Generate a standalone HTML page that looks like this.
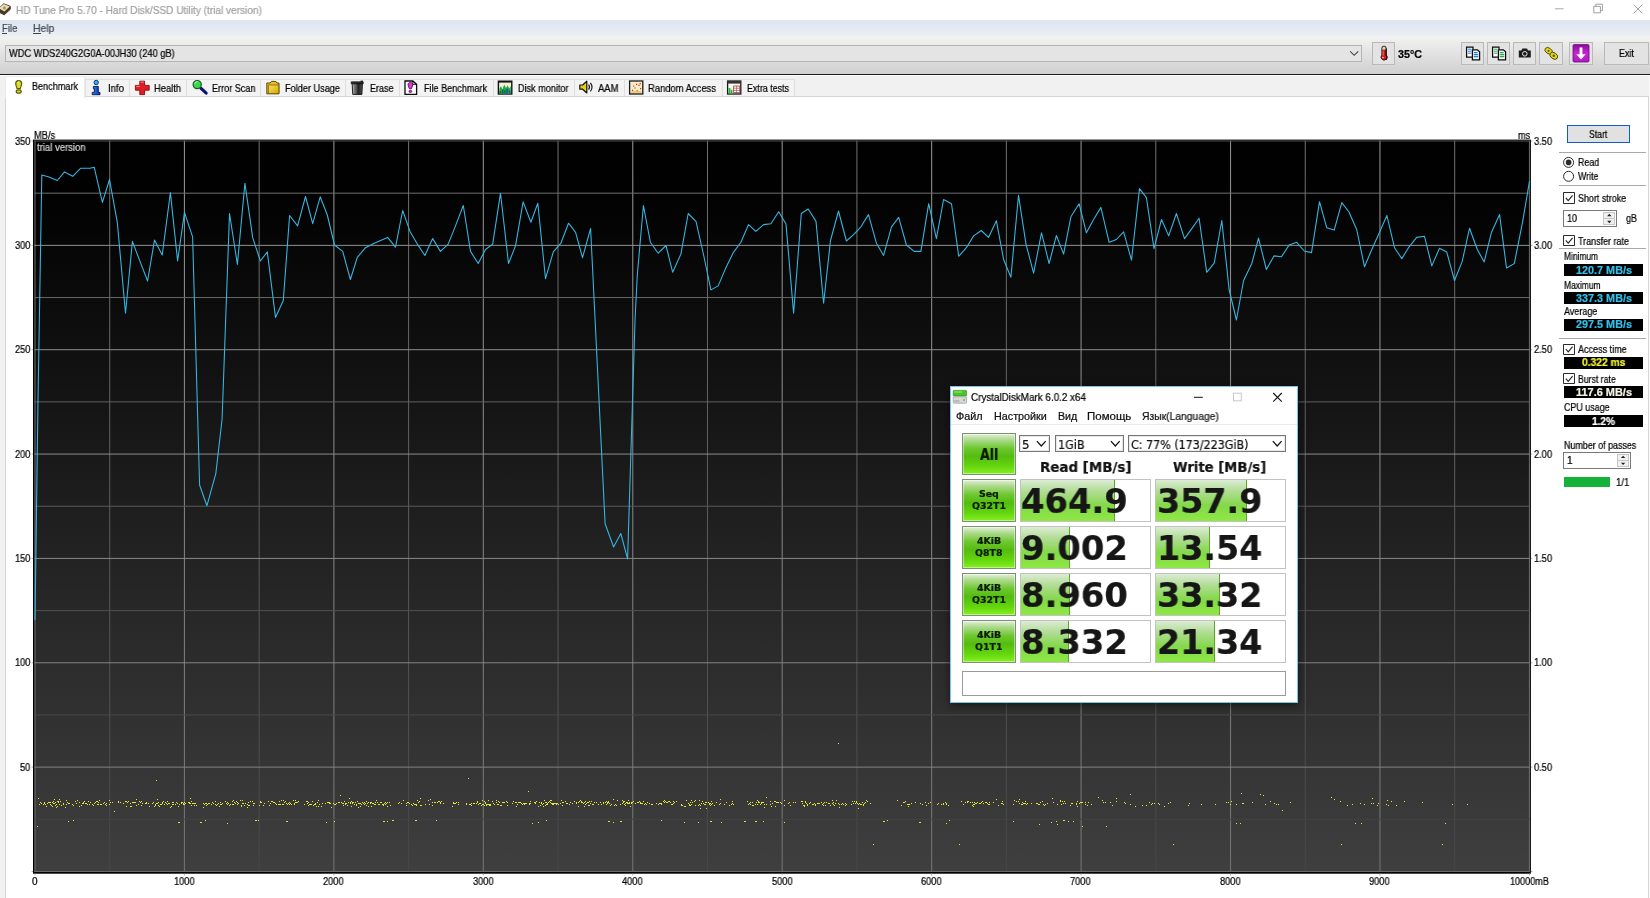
<!DOCTYPE html>
<html lang="en"><head><meta charset="utf-8"><title>HD Tune Pro 5.70 - Hard Disk/SSD Utility (trial version)</title>
<style>
html,body{margin:0;padding:0}
body{width:1650px;height:898px;overflow:hidden;background:#fff;position:relative;font-family:"Liberation Sans",sans-serif}
.t{position:absolute;white-space:nowrap;margin:0;padding:0;will-change:transform;-webkit-text-stroke:0.22px currentColor}
.b{position:absolute;box-sizing:border-box}
svg{position:absolute;left:0;top:0;overflow:visible}
u{text-decoration:underline;text-underline-offset:1px}
</style></head><body>
<div class="b" style="left:0.00px;top:0.00px;width:1650.00px;height:20.00px;background:#fff"></div>
<div class="t" style="left:16.20px;top:3.30px;font-size:10.6px;line-height:14px;color:#a0a0a0;font-family:'Liberation Sans',sans-serif;transform:scaleX(0.9513);transform-origin:0 50%;">HD Tune Pro 5.70 - Hard Disk/SSD Utility (trial version)</div>
<div class="b" style="left:0.00px;top:20.00px;width:1650.00px;height:16.50px;background:linear-gradient(#dde5f0 0%,#e6ebf3 60%,#eef0f4 100%)"></div>
<div class="t" style="left:2.00px;top:20.90px;font-size:10.9px;line-height:14px;color:#414a54;font-family:'Liberation Sans',sans-serif;transform:scaleX(0.8768);transform-origin:0 50%;">File</div>
<div class="t" style="left:33.20px;top:20.90px;font-size:10.9px;line-height:14px;color:#414a54;font-family:'Liberation Sans',sans-serif;transform:scaleX(0.9590);transform-origin:0 50%;">Help</div>
<div class="b" style="left:2.00px;top:33.20px;width:5.10px;height:0.80px;background:#444"></div>
<div class="b" style="left:33.00px;top:33.20px;width:7.50px;height:0.80px;background:#444"></div>
<div class="b" style="left:0.00px;top:36.50px;width:1650.00px;height:37.70px;background:linear-gradient(#f2f2f2 0%,#e2e2e2 45%,#d0d0d0 100%)"></div>
<div class="b" style="left:0.00px;top:74.20px;width:1650.00px;height:1.30px;background:#1c1c1c"></div>
<div class="b" style="left:5.00px;top:44.50px;width:1357.30px;height:17.30px;background:#e4e4e4;border:1px solid #b4b4b4"></div>
<div class="t" style="left:8.60px;top:46.90px;font-size:10.3px;line-height:13px;color:#000;font-family:'Liberation Sans',sans-serif;transform:scaleX(0.8989);transform-origin:0 50%;">WDC WDS240G2G0A-00JH30 (240 gB)</div>
<svg width="1650" height="898"><path d="M1350.2 51.3 L1354.2 55.3 L1358.2 51.3" fill="none" stroke="#444" stroke-width="1.1"/></svg>
<div class="b" style="left:1372.30px;top:42.30px;width:22.60px;height:22.50px;background:#e3e3e3;border:1px solid #b9b9b9"></div>
<div class="t" style="left:1398.00px;top:47.40px;font-size:10.8px;line-height:14px;color:#000;font-family:'Liberation Sans',sans-serif;transform:scaleX(0.9945);transform-origin:0 50%;font-weight:bold;">35°C</div>
<div class="b" style="left:1461.20px;top:42.30px;width:23.10px;height:22.50px;background:#e3e3e3;border:1px solid #b9b9b9"></div>
<div class="b" style="left:1487.10px;top:42.30px;width:23.30px;height:22.50px;background:#e3e3e3;border:1px solid #b9b9b9"></div>
<div class="b" style="left:1513.00px;top:42.30px;width:23.30px;height:22.50px;background:#e3e3e3;border:1px solid #b9b9b9"></div>
<div class="b" style="left:1539.10px;top:42.30px;width:23.50px;height:22.50px;background:#e3e3e3;border:1px solid #b9b9b9"></div>
<div class="b" style="left:1569.20px;top:42.30px;width:23.50px;height:22.50px;background:#e3e3e3;border:1px solid #b9b9b9"></div>
<div class="b" style="left:1604.00px;top:42.30px;width:44.50px;height:22.50px;background:#e3e3e3;border:1px solid #b9b9b9"></div>
<div class="t" style="left:1618.50px;top:47.10px;font-size:10.3px;line-height:13px;color:#000;font-family:'Liberation Sans',sans-serif;transform:scaleX(0.8736);transform-origin:0 50%;">Exit</div>
<div class="b" style="left:0.00px;top:75.50px;width:1650.00px;height:822.50px;background:#f1f1f1"></div>
<div class="b" style="left:5.20px;top:95.60px;width:1643.80px;height:809.40px;background:#fff;border:1px solid #d6d6d6"></div>
<div class="b" style="left:85.00px;top:79.00px;width:45.00px;height:17.20px;background:#f3f3f3;border:1px solid #dedede;border-bottom:none"></div>
<div class="t" style="left:108.40px;top:81.80px;font-size:10.3px;line-height:13px;color:#000;font-family:'Liberation Sans',sans-serif;transform:scaleX(0.9313);transform-origin:0 50%;">Info</div>
<div class="b" style="left:129.00px;top:79.00px;width:58.00px;height:17.20px;background:#f3f3f3;border:1px solid #dedede;border-bottom:none"></div>
<div class="t" style="left:154.40px;top:81.80px;font-size:10.3px;line-height:13px;color:#000;font-family:'Liberation Sans',sans-serif;transform:scaleX(0.9068);transform-origin:0 50%;">Health</div>
<div class="b" style="left:186.00px;top:79.00px;width:75.00px;height:17.20px;background:#f3f3f3;border:1px solid #dedede;border-bottom:none"></div>
<div class="t" style="left:211.90px;top:81.80px;font-size:10.3px;line-height:13px;color:#000;font-family:'Liberation Sans',sans-serif;transform:scaleX(0.8836);transform-origin:0 50%;">Error Scan</div>
<div class="b" style="left:260.00px;top:79.00px;width:86.00px;height:17.20px;background:#f3f3f3;border:1px solid #dedede;border-bottom:none"></div>
<div class="t" style="left:285.40px;top:81.80px;font-size:10.3px;line-height:13px;color:#000;font-family:'Liberation Sans',sans-serif;transform:scaleX(0.8895);transform-origin:0 50%;">Folder Usage</div>
<div class="b" style="left:345.00px;top:79.00px;width:54.50px;height:17.20px;background:#f3f3f3;border:1px solid #dedede;border-bottom:none"></div>
<div class="t" style="left:370.40px;top:81.80px;font-size:10.3px;line-height:13px;color:#000;font-family:'Liberation Sans',sans-serif;transform:scaleX(0.8733);transform-origin:0 50%;">Erase</div>
<div class="b" style="left:398.50px;top:79.00px;width:95.00px;height:17.20px;background:#f3f3f3;border:1px solid #dedede;border-bottom:none"></div>
<div class="t" style="left:423.90px;top:81.80px;font-size:10.3px;line-height:13px;color:#000;font-family:'Liberation Sans',sans-serif;transform:scaleX(0.8804);transform-origin:0 50%;">File Benchmark</div>
<div class="b" style="left:492.50px;top:79.00px;width:82.00px;height:17.20px;background:#f3f3f3;border:1px solid #dedede;border-bottom:none"></div>
<div class="t" style="left:517.90px;top:81.80px;font-size:10.3px;line-height:13px;color:#000;font-family:'Liberation Sans',sans-serif;transform:scaleX(0.8823);transform-origin:0 50%;">Disk monitor</div>
<div class="b" style="left:573.50px;top:79.00px;width:51.00px;height:17.20px;background:#f3f3f3;border:1px solid #dedede;border-bottom:none"></div>
<div class="t" style="left:598.40px;top:81.80px;font-size:10.3px;line-height:13px;color:#000;font-family:'Liberation Sans',sans-serif;transform:scaleX(0.9184);transform-origin:0 50%;">AAM</div>
<div class="b" style="left:623.50px;top:79.00px;width:99.00px;height:17.20px;background:#f3f3f3;border:1px solid #dedede;border-bottom:none"></div>
<div class="t" style="left:648.40px;top:81.80px;font-size:10.3px;line-height:13px;color:#000;font-family:'Liberation Sans',sans-serif;transform:scaleX(0.9137);transform-origin:0 50%;">Random Access</div>
<div class="b" style="left:721.50px;top:79.00px;width:73.00px;height:17.20px;background:#f3f3f3;border:1px solid #dedede;border-bottom:none"></div>
<div class="t" style="left:746.90px;top:81.80px;font-size:10.3px;line-height:13px;color:#000;font-family:'Liberation Sans',sans-serif;transform:scaleX(0.8632);transform-origin:0 50%;">Extra tests</div>
<div class="b" style="left:5.20px;top:75.60px;width:80.30px;height:22.40px;background:#fff;border:1px solid #ebebeb;border-bottom:none"></div>
<div class="t" style="left:32.30px;top:80.10px;font-size:10.3px;line-height:13px;color:#000;font-family:'Liberation Sans',sans-serif;transform:scaleX(0.8830);transform-origin:0 50%;">Benchmark</div>
<svg width="1650" height="898" viewBox="0 0 1650 898">
<defs><linearGradient id="cg" x1="0" y1="0" x2="0" y2="1"><stop offset="0" stop-color="#000"/><stop offset="0.08" stop-color="#020202"/><stop offset="1" stop-color="#3f3f3f"/></linearGradient></defs>
<rect x="33" y="139.6" width="1497.9" height="734.1" fill="#000"/>
<rect x="34.5" y="140.5" width="1495.4" height="731.5" fill="url(#cg)"/>
<defs><linearGradient id="gmin" gradientUnits="userSpaceOnUse" x1="0" y1="141.0" x2="0" y2="871.5"><stop offset="0" stop-color="#727272"/><stop offset="1" stop-color="#464646"/></linearGradient><linearGradient id="gmaj" gradientUnits="userSpaceOnUse" x1="0" y1="141.0" x2="0" y2="871.5"><stop offset="0" stop-color="#8e8e8e"/><stop offset="1" stop-color="#707070"/></linearGradient></defs>
<line x1="35.00" y1="140.5" x2="35.00" y2="872.0" stroke="#6e6e6e" stroke-width="1"/>
<line x1="109.72" y1="140.5" x2="109.72" y2="872.0" stroke="url(#gmin)" stroke-width="1"/>
<line x1="184.44" y1="140.5" x2="184.44" y2="872.0" stroke="url(#gmaj)" stroke-width="1.1"/>
<line x1="259.16" y1="140.5" x2="259.16" y2="872.0" stroke="url(#gmin)" stroke-width="1"/>
<line x1="333.88" y1="140.5" x2="333.88" y2="872.0" stroke="url(#gmaj)" stroke-width="1.1"/>
<line x1="408.60" y1="140.5" x2="408.60" y2="872.0" stroke="url(#gmin)" stroke-width="1"/>
<line x1="483.32" y1="140.5" x2="483.32" y2="872.0" stroke="url(#gmaj)" stroke-width="1.1"/>
<line x1="558.04" y1="140.5" x2="558.04" y2="872.0" stroke="url(#gmin)" stroke-width="1"/>
<line x1="632.76" y1="140.5" x2="632.76" y2="872.0" stroke="url(#gmaj)" stroke-width="1.1"/>
<line x1="707.48" y1="140.5" x2="707.48" y2="872.0" stroke="url(#gmin)" stroke-width="1"/>
<line x1="782.20" y1="140.5" x2="782.20" y2="872.0" stroke="url(#gmaj)" stroke-width="1.1"/>
<line x1="856.92" y1="140.5" x2="856.92" y2="872.0" stroke="url(#gmin)" stroke-width="1"/>
<line x1="931.64" y1="140.5" x2="931.64" y2="872.0" stroke="url(#gmaj)" stroke-width="1.1"/>
<line x1="1006.36" y1="140.5" x2="1006.36" y2="872.0" stroke="url(#gmin)" stroke-width="1"/>
<line x1="1081.08" y1="140.5" x2="1081.08" y2="872.0" stroke="url(#gmaj)" stroke-width="1.1"/>
<line x1="1155.80" y1="140.5" x2="1155.80" y2="872.0" stroke="url(#gmin)" stroke-width="1"/>
<line x1="1230.52" y1="140.5" x2="1230.52" y2="872.0" stroke="url(#gmaj)" stroke-width="1.1"/>
<line x1="1305.24" y1="140.5" x2="1305.24" y2="872.0" stroke="url(#gmin)" stroke-width="1"/>
<line x1="1379.96" y1="140.5" x2="1379.96" y2="872.0" stroke="url(#gmaj)" stroke-width="1.1"/>
<line x1="1454.68" y1="140.5" x2="1454.68" y2="872.0" stroke="url(#gmin)" stroke-width="1"/>
<line x1="1529.40" y1="140.5" x2="1529.40" y2="872.0" stroke="#6e6e6e" stroke-width="1"/>
<line x1="34.5" y1="871.50" x2="1529.9" y2="871.50" stroke="#686868" stroke-width="1"/>
<line x1="34.5" y1="819.32" x2="1529.9" y2="819.32" stroke="#434343" stroke-width="1"/>
<line x1="34.5" y1="767.14" x2="1529.9" y2="767.14" stroke="#818181" stroke-width="1"/>
<line x1="34.5" y1="714.96" x2="1529.9" y2="714.96" stroke="#4a4a4a" stroke-width="1"/>
<line x1="34.5" y1="662.79" x2="1529.9" y2="662.79" stroke="#858585" stroke-width="1"/>
<line x1="34.5" y1="610.61" x2="1529.9" y2="610.61" stroke="#515151" stroke-width="1"/>
<line x1="34.5" y1="558.43" x2="1529.9" y2="558.43" stroke="#888888" stroke-width="1"/>
<line x1="34.5" y1="506.25" x2="1529.9" y2="506.25" stroke="#585858" stroke-width="1"/>
<line x1="34.5" y1="454.07" x2="1529.9" y2="454.07" stroke="#8c8c8c" stroke-width="1"/>
<line x1="34.5" y1="401.89" x2="1529.9" y2="401.89" stroke="#606060" stroke-width="1"/>
<line x1="34.5" y1="349.71" x2="1529.9" y2="349.71" stroke="#8f8f8f" stroke-width="1"/>
<line x1="34.5" y1="297.54" x2="1529.9" y2="297.54" stroke="#676767" stroke-width="1"/>
<line x1="34.5" y1="245.36" x2="1529.9" y2="245.36" stroke="#939393" stroke-width="1"/>
<line x1="34.5" y1="193.18" x2="1529.9" y2="193.18" stroke="#6e6e6e" stroke-width="1"/>
<line x1="34.5" y1="141.00" x2="1529.9" y2="141.00" stroke="#525252" stroke-width="1"/>
<line x1="35.00" y1="873.7" x2="35.00" y2="875.4" stroke="#aaa" stroke-width="1"/>
<line x1="184.44" y1="873.7" x2="184.44" y2="875.4" stroke="#aaa" stroke-width="1"/>
<line x1="333.88" y1="873.7" x2="333.88" y2="875.4" stroke="#aaa" stroke-width="1"/>
<line x1="483.32" y1="873.7" x2="483.32" y2="875.4" stroke="#aaa" stroke-width="1"/>
<line x1="632.76" y1="873.7" x2="632.76" y2="875.4" stroke="#aaa" stroke-width="1"/>
<line x1="782.20" y1="873.7" x2="782.20" y2="875.4" stroke="#aaa" stroke-width="1"/>
<line x1="931.64" y1="873.7" x2="931.64" y2="875.4" stroke="#aaa" stroke-width="1"/>
<line x1="1081.08" y1="873.7" x2="1081.08" y2="875.4" stroke="#aaa" stroke-width="1"/>
<line x1="1230.52" y1="873.7" x2="1230.52" y2="875.4" stroke="#aaa" stroke-width="1"/>
<line x1="1379.96" y1="873.7" x2="1379.96" y2="875.4" stroke="#aaa" stroke-width="1"/>
<line x1="1529.40" y1="873.7" x2="1529.40" y2="875.4" stroke="#aaa" stroke-width="1"/>
<line x1="31.6" y1="871.50" x2="33" y2="871.50" stroke="#aaa" stroke-width="1"/>
<line x1="1531" y1="871.50" x2="1532.4" y2="871.50" stroke="#aaa" stroke-width="1"/>
<line x1="31.6" y1="767.14" x2="33" y2="767.14" stroke="#aaa" stroke-width="1"/>
<line x1="1531" y1="767.14" x2="1532.4" y2="767.14" stroke="#aaa" stroke-width="1"/>
<line x1="31.6" y1="662.79" x2="33" y2="662.79" stroke="#aaa" stroke-width="1"/>
<line x1="1531" y1="662.79" x2="1532.4" y2="662.79" stroke="#aaa" stroke-width="1"/>
<line x1="31.6" y1="558.43" x2="33" y2="558.43" stroke="#aaa" stroke-width="1"/>
<line x1="1531" y1="558.43" x2="1532.4" y2="558.43" stroke="#aaa" stroke-width="1"/>
<line x1="31.6" y1="454.07" x2="33" y2="454.07" stroke="#aaa" stroke-width="1"/>
<line x1="1531" y1="454.07" x2="1532.4" y2="454.07" stroke="#aaa" stroke-width="1"/>
<line x1="31.6" y1="349.71" x2="33" y2="349.71" stroke="#aaa" stroke-width="1"/>
<line x1="1531" y1="349.71" x2="1532.4" y2="349.71" stroke="#aaa" stroke-width="1"/>
<line x1="31.6" y1="245.36" x2="33" y2="245.36" stroke="#aaa" stroke-width="1"/>
<line x1="1531" y1="245.36" x2="1532.4" y2="245.36" stroke="#aaa" stroke-width="1"/>
<line x1="31.6" y1="141.00" x2="33" y2="141.00" stroke="#aaa" stroke-width="1"/>
<line x1="1531" y1="141.00" x2="1532.4" y2="141.00" stroke="#aaa" stroke-width="1"/>
<path d="M37 826.5h1M38 798.5h1M39 804.5h1M40 802.5h1M41 803.5h1M43 804.5h1M44 802.5h1M44 803.5h1M45 804.5h1M46 806.5h1M47 803.5h1M48 802.5h1M49 802.5h1M50 802.5h1M50 804.5h1M51 805.5h1M52 802.5h1M52 806.5h1M53 801.5h1M53 803.5h1M54 799.5h1M54 803.5h1M55 802.5h1M55 805.5h1M56 804.5h1M56 807.5h1M57 801.5h1M57 806.5h1M58 801.5h1M58 802.5h1M59 799.5h1M59 804.5h1M60 801.5h1M61 805.5h1M63 803.5h1M63 804.5h1M65 807.5h1M66 800.5h1M66 804.5h1M67 802.5h1M68 803.5h1M68 821.5h1M69 803.5h1M72 804.5h1M73 805.5h1M73 820.5h1M75 801.5h1M76 803.5h1M77 800.5h1M79 802.5h1M79 806.5h1M81 805.5h1M82 803.5h1M83 802.5h1M83 803.5h1M84 801.5h1M85 803.5h1M86 803.5h1M87 804.5h1M88 801.5h1M89 804.5h1M90 802.5h1M92 804.5h1M93 805.5h1M94 803.5h1M95 802.5h1M96 801.5h1M97 801.5h1M97 804.5h1M98 802.5h1M98 804.5h1M99 800.5h1M100 804.5h1M101 804.5h1M103 803.5h1M104 802.5h1M105 804.5h1M106 803.5h1M106 805.5h1M109 800.5h1M109 804.5h1M110 802.5h1M112 802.5h1M114 811.5h1M118 801.5h1M118 802.5h1M120 802.5h1M123 803.5h1M125 801.5h1M126 801.5h1M126 806.5h1M127 802.5h1M128 801.5h1M130 803.5h1M130 806.5h1M131 806.5h1M132 802.5h1M133 802.5h1M134 802.5h1M135 802.5h1M136 799.5h1M136 805.5h1M138 804.5h1M139 801.5h1M140 802.5h1M141 801.5h1M141 805.5h1M142 803.5h1M145 803.5h1M146 802.5h1M146 803.5h1M148 803.5h1M149 806.5h1M152 803.5h1M153 802.5h1M154 806.5h1M155 804.5h1M155 805.5h1M156 780.5h1M156 803.5h1M157 799.5h1M157 803.5h1M158 802.5h1M158 805.5h1M159 806.5h1M160 804.5h1M161 804.5h1M162 802.5h1M162 803.5h1M163 801.5h1M164 804.5h1M165 802.5h1M166 803.5h1M167 801.5h1M167 804.5h1M168 803.5h1M169 803.5h1M170 807.5h1M171 806.5h1M172 802.5h1M172 804.5h1M173 802.5h1M173 804.5h1M175 804.5h1M176 802.5h1M177 803.5h1M178 806.5h1M178 822.5h1M179 804.5h1M179 822.5h1M181 802.5h1M181 803.5h1M182 802.5h1M183 803.5h1M183 804.5h1M184 802.5h1M184 804.5h1M185 803.5h1M188 802.5h1M189 802.5h1M189 803.5h1M190 798.5h1M190 803.5h1M191 801.5h1M191 805.5h1M192 803.5h1M193 803.5h1M194 803.5h1M194 805.5h1M195 803.5h1M196 805.5h1M200 822.5h1M201 822.5h1M203 803.5h1M203 807.5h1M204 804.5h1M205 803.5h1M205 820.5h1M206 803.5h1M206 805.5h1M207 804.5h1M208 803.5h1M209 803.5h1M211 804.5h1M212 802.5h1M213 803.5h1M215 801.5h1M215 804.5h1M216 805.5h1M217 804.5h1M218 803.5h1M219 806.5h1M220 802.5h1M220 804.5h1M221 804.5h1M222 803.5h1M225 801.5h1M226 803.5h1M227 802.5h1M227 804.5h1M227 823.5h1M228 803.5h1M229 805.5h1M230 804.5h1M232 801.5h1M232 804.5h1M233 800.5h1M233 804.5h1M234 802.5h1M235 803.5h1M236 801.5h1M237 802.5h1M237 804.5h1M238 803.5h1M240 800.5h1M241 805.5h1M241 806.5h1M242 800.5h1M242 803.5h1M243 803.5h1M244 805.5h1M245 803.5h1M247 804.5h1M247 807.5h1M248 802.5h1M248 805.5h1M249 805.5h1M250 801.5h1M252 801.5h1M253 803.5h1M253 805.5h1M254 803.5h1M255 820.5h1M256 820.5h1M258 820.5h1M259 805.5h1M260 801.5h1M260 802.5h1M261 802.5h1M263 805.5h1M264 803.5h1M268 801.5h1M269 805.5h1M270 803.5h1M271 801.5h1M272 801.5h1M273 802.5h1M274 802.5h1M275 803.5h1M276 804.5h1M278 804.5h1M279 801.5h1M279 804.5h1M280 804.5h1M281 800.5h1M282 804.5h1M283 800.5h1M283 804.5h1M284 802.5h1M285 801.5h1M286 803.5h1M286 821.5h1M287 804.5h1M287 821.5h1M288 803.5h1M289 802.5h1M289 804.5h1M290 803.5h1M291 804.5h1M293 800.5h1M294 803.5h1M294 804.5h1M295 800.5h1M295 802.5h1M296 802.5h1M297 802.5h1M298 801.5h1M304 804.5h1M306 801.5h1M307 801.5h1M307 803.5h1M308 802.5h1M308 805.5h1M309 804.5h1M310 804.5h1M311 804.5h1M312 801.5h1M313 805.5h1M314 804.5h1M315 803.5h1M315 804.5h1M316 806.5h1M317 802.5h1M318 800.5h1M318 806.5h1M319 804.5h1M321 806.5h1M322 803.5h1M325 803.5h1M326 822.5h1M327 802.5h1M328 802.5h1M329 802.5h1M329 803.5h1M330 803.5h1M331 807.5h1M333 803.5h1M334 804.5h1M334 821.5h1M335 804.5h1M336 803.5h1M338 802.5h1M339 802.5h1M340 795.5h1M341 802.5h1M342 803.5h1M343 803.5h1M343 805.5h1M344 801.5h1M345 803.5h1M345 804.5h1M346 803.5h1M347 805.5h1M348 802.5h1M349 798.5h1M350 802.5h1M350 803.5h1M351 801.5h1M351 806.5h1M352 802.5h1M352 803.5h1M353 802.5h1M354 804.5h1M355 802.5h1M356 804.5h1M356 805.5h1M357 801.5h1M358 803.5h1M358 807.5h1M359 803.5h1M360 803.5h1M360 806.5h1M361 804.5h1M362 802.5h1M363 803.5h1M364 802.5h1M364 804.5h1M365 803.5h1M366 801.5h1M366 805.5h1M367 803.5h1M368 802.5h1M368 806.5h1M370 802.5h1M370 803.5h1M371 802.5h1M371 806.5h1M372 803.5h1M373 803.5h1M374 804.5h1M375 802.5h1M375 804.5h1M376 800.5h1M377 802.5h1M378 804.5h1M379 804.5h1M380 802.5h1M381 802.5h1M382 804.5h1M383 804.5h1M383 805.5h1M383 821.5h1M384 803.5h1M384 821.5h1M385 802.5h1M385 804.5h1M386 803.5h1M387 802.5h1M387 806.5h1M387 821.5h1M389 802.5h1M390 805.5h1M392 820.5h1M393 820.5h1M398 803.5h1M399 802.5h1M401 803.5h1M403 800.5h1M406 803.5h1M406 805.5h1M407 802.5h1M408 802.5h1M409 803.5h1M411 804.5h1M412 805.5h1M413 803.5h1M414 804.5h1M415 804.5h1M415 820.5h1M416 804.5h1M416 805.5h1M416 820.5h1M417 800.5h1M418 802.5h1M419 801.5h1M420 798.5h1M420 805.5h1M421 805.5h1M425 804.5h1M428 800.5h1M429 804.5h1M430 799.5h1M432 802.5h1M432 805.5h1M434 802.5h1M435 802.5h1M436 820.5h1M437 802.5h1M438 801.5h1M439 801.5h1M440 802.5h1M440 803.5h1M441 801.5h1M443 803.5h1M452 806.5h1M453 802.5h1M453 803.5h1M454 803.5h1M455 803.5h1M456 802.5h1M458 802.5h1M458 804.5h1M466 803.5h1M466 804.5h1M468 778.5h1M469 804.5h1M470 804.5h1M471 803.5h1M471 805.5h1M473 803.5h1M474 803.5h1M476 803.5h1M477 801.5h1M477 802.5h1M478 804.5h1M479 803.5h1M480 803.5h1M481 805.5h1M482 800.5h1M482 804.5h1M483 804.5h1M484 801.5h1M484 805.5h1M485 802.5h1M485 803.5h1M486 804.5h1M486 805.5h1M487 804.5h1M488 800.5h1M488 804.5h1M489 804.5h1M489 805.5h1M490 804.5h1M490 805.5h1M492 801.5h1M493 803.5h1M494 804.5h1M496 800.5h1M496 802.5h1M497 804.5h1M498 801.5h1M498 804.5h1M499 802.5h1M500 805.5h1M501 805.5h1M502 802.5h1M503 802.5h1M504 802.5h1M506 801.5h1M507 802.5h1M507 805.5h1M512 803.5h1M513 801.5h1M515 802.5h1M516 802.5h1M516 806.5h1M517 804.5h1M518 802.5h1M519 802.5h1M520 802.5h1M521 803.5h1M522 804.5h1M523 803.5h1M524 803.5h1M524 804.5h1M525 803.5h1M526 803.5h1M528 791.5h1M529 803.5h1M529 804.5h1M530 801.5h1M530 803.5h1M532 823.5h1M534 802.5h1M535 802.5h1M535 803.5h1M536 801.5h1M538 806.5h1M538 822.5h1M539 802.5h1M540 805.5h1M541 802.5h1M541 803.5h1M542 804.5h1M543 803.5h1M543 806.5h1M544 800.5h1M545 802.5h1M545 805.5h1M546 802.5h1M546 804.5h1M546 820.5h1M547 803.5h1M547 804.5h1M548 802.5h1M549 801.5h1M550 800.5h1M550 802.5h1M551 800.5h1M551 803.5h1M552 803.5h1M552 804.5h1M553 803.5h1M553 804.5h1M554 803.5h1M555 803.5h1M556 803.5h1M556 804.5h1M557 803.5h1M558 804.5h1M560 803.5h1M561 800.5h1M562 802.5h1M562 805.5h1M563 802.5h1M565 801.5h1M566 803.5h1M567 803.5h1M569 804.5h1M570 802.5h1M572 803.5h1M574 801.5h1M576 802.5h1M576 803.5h1M578 802.5h1M578 806.5h1M579 801.5h1M580 800.5h1M581 801.5h1M581 802.5h1M582 802.5h1M583 803.5h1M584 802.5h1M584 806.5h1M585 801.5h1M585 804.5h1M586 803.5h1M587 802.5h1M588 802.5h1M588 805.5h1M589 801.5h1M589 805.5h1M590 803.5h1M591 801.5h1M592 804.5h1M593 804.5h1M594 802.5h1M596 802.5h1M598 804.5h1M600 802.5h1M601 804.5h1M603 802.5h1M603 803.5h1M605 802.5h1M606 801.5h1M606 804.5h1M607 802.5h1M607 803.5h1M608 801.5h1M608 802.5h1M608 821.5h1M609 803.5h1M609 821.5h1M610 805.5h1M611 804.5h1M613 799.5h1M613 822.5h1M614 805.5h1M615 804.5h1M616 805.5h1M617 800.5h1M620 804.5h1M620 821.5h1M621 821.5h1M622 800.5h1M622 803.5h1M623 801.5h1M623 802.5h1M624 801.5h1M624 804.5h1M625 803.5h1M625 805.5h1M626 802.5h1M627 802.5h1M627 803.5h1M628 800.5h1M628 803.5h1M629 802.5h1M629 803.5h1M630 806.5h1M631 802.5h1M631 803.5h1M632 802.5h1M633 801.5h1M635 803.5h1M637 802.5h1M638 802.5h1M639 801.5h1M640 802.5h1M640 803.5h1M641 803.5h1M642 803.5h1M643 801.5h1M644 804.5h1M645 803.5h1M646 804.5h1M647 802.5h1M649 803.5h1M651 804.5h1M652 804.5h1M656 803.5h1M658 804.5h1M659 803.5h1M660 803.5h1M661 803.5h1M661 804.5h1M661 820.5h1M663 801.5h1M664 800.5h1M664 802.5h1M665 801.5h1M666 802.5h1M667 802.5h1M668 801.5h1M669 801.5h1M670 802.5h1M671 804.5h1M672 804.5h1M673 801.5h1M673 803.5h1M674 802.5h1M676 801.5h1M681 804.5h1M681 805.5h1M682 805.5h1M684 806.5h1M684 822.5h1M685 806.5h1M686 800.5h1M688 803.5h1M689 804.5h1M689 805.5h1M690 802.5h1M690 805.5h1M691 800.5h1M691 804.5h1M692 802.5h1M694 801.5h1M695 800.5h1M695 805.5h1M698 805.5h1M698 822.5h1M699 800.5h1M699 804.5h1M700 805.5h1M700 808.5h1M701 803.5h1M702 801.5h1M703 803.5h1M704 804.5h1M705 802.5h1M705 804.5h1M706 802.5h1M706 808.5h1M708 802.5h1M709 803.5h1M709 804.5h1M710 803.5h1M710 805.5h1M710 821.5h1M711 801.5h1M711 804.5h1M711 821.5h1M712 803.5h1M714 805.5h1M716 802.5h1M719 804.5h1M720 799.5h1M720 803.5h1M721 822.5h1M724 804.5h1M726 802.5h1M729 805.5h1M731 804.5h1M732 801.5h1M732 803.5h1M733 804.5h1M744 821.5h1M745 821.5h1M747 801.5h1M748 804.5h1M749 803.5h1M750 802.5h1M750 804.5h1M752 802.5h1M752 805.5h1M753 805.5h1M755 804.5h1M755 821.5h1M756 802.5h1M756 821.5h1M757 800.5h1M757 804.5h1M758 801.5h1M758 802.5h1M759 802.5h1M760 804.5h1M761 802.5h1M761 803.5h1M762 802.5h1M763 802.5h1M763 821.5h1M764 804.5h1M764 807.5h1M766 797.5h1M766 804.5h1M770 801.5h1M770 804.5h1M771 806.5h1M772 803.5h1M774 801.5h1M775 801.5h1M775 806.5h1M776 802.5h1M777 802.5h1M778 802.5h1M780 802.5h1M781 803.5h1M784 800.5h1M784 805.5h1M784 822.5h1M788 803.5h1M789 802.5h1M790 805.5h1M793 802.5h1M795 802.5h1M801 801.5h1M802 801.5h1M802 803.5h1M803 805.5h1M804 805.5h1M804 806.5h1M805 801.5h1M805 802.5h1M806 803.5h1M807 804.5h1M807 805.5h1M809 803.5h1M810 802.5h1M812 804.5h1M813 804.5h1M814 803.5h1M815 804.5h1M815 805.5h1M817 803.5h1M818 803.5h1M819 803.5h1M821 802.5h1M822 804.5h1M823 803.5h1M823 805.5h1M824 802.5h1M825 805.5h1M826 802.5h1M828 803.5h1M829 803.5h1M830 805.5h1M832 800.5h1M832 803.5h1M833 802.5h1M833 804.5h1M834 805.5h1M835 803.5h1M836 800.5h1M838 743.5h1M838 803.5h1M839 804.5h1M839 807.5h1M841 804.5h1M842 803.5h1M843 804.5h1M845 803.5h1M845 805.5h1M846 804.5h1M851 804.5h1M852 801.5h1M853 803.5h1M854 801.5h1M855 803.5h1M856 801.5h1M856 802.5h1M857 803.5h1M858 804.5h1M858 808.5h1M859 803.5h1M860 804.5h1M861 804.5h1M862 802.5h1M863 804.5h1M863 805.5h1M864 803.5h1M865 802.5h1M866 800.5h1M867 801.5h1M870 803.5h1M873 844.5h1M883 821.5h1M884 821.5h1M887 820.5h1M897 800.5h1M901 805.5h1M903 802.5h1M904 802.5h1M905 801.5h1M907 804.5h1M908 804.5h1M908 806.5h1M909 804.5h1M911 803.5h1M915 802.5h1M919 822.5h1M920 803.5h1M920 822.5h1M922 804.5h1M925 802.5h1M926 805.5h1M928 803.5h1M930 802.5h1M937 804.5h1M938 803.5h1M941 804.5h1M943 803.5h1M943 804.5h1M945 802.5h1M946 803.5h1M946 804.5h1M946 823.5h1M948 805.5h1M949 820.5h1M959 844.5h1M961 801.5h1M963 804.5h1M965 802.5h1M967 801.5h1M967 802.5h1M968 801.5h1M970 802.5h1M972 802.5h1M972 805.5h1M973 804.5h1M973 806.5h1M974 802.5h1M974 804.5h1M975 803.5h1M976 803.5h1M977 802.5h1M979 803.5h1M980 803.5h1M981 802.5h1M982 801.5h1M983 803.5h1M985 802.5h1M986 802.5h1M987 803.5h1M988 804.5h1M989 802.5h1M989 804.5h1M993 802.5h1M996 799.5h1M998 805.5h1M1001 803.5h1M1002 801.5h1M1002 803.5h1M1003 804.5h1M1013 804.5h1M1013 821.5h1M1014 800.5h1M1016 801.5h1M1018 801.5h1M1019 799.5h1M1019 803.5h1M1021 804.5h1M1022 802.5h1M1022 804.5h1M1023 803.5h1M1024 803.5h1M1025 801.5h1M1025 803.5h1M1026 804.5h1M1027 803.5h1M1031 803.5h1M1036 803.5h1M1037 803.5h1M1038 804.5h1M1039 804.5h1M1039 824.5h1M1040 802.5h1M1042 801.5h1M1043 804.5h1M1044 805.5h1M1045 804.5h1M1047 803.5h1M1051 822.5h1M1052 798.5h1M1053 802.5h1M1056 821.5h1M1057 804.5h1M1057 824.5h1M1060 800.5h1M1060 801.5h1M1061 804.5h1M1062 801.5h1M1063 803.5h1M1063 820.5h1M1064 801.5h1M1064 820.5h1M1065 803.5h1M1068 821.5h1M1070 805.5h1M1071 803.5h1M1072 803.5h1M1073 821.5h1M1076 803.5h1M1076 804.5h1M1077 801.5h1M1077 806.5h1M1079 803.5h1M1080 802.5h1M1081 802.5h1M1082 802.5h1M1082 826.5h1M1085 802.5h1M1085 804.5h1M1087 805.5h1M1088 802.5h1M1091 804.5h1M1098 797.5h1M1102 800.5h1M1103 802.5h1M1105 802.5h1M1106 826.5h1M1110 802.5h1M1112 805.5h1M1116 798.5h1M1116 801.5h1M1124 802.5h1M1125 803.5h1M1130 794.5h1M1130 804.5h1M1135 806.5h1M1142 805.5h1M1146 805.5h1M1149 802.5h1M1151 804.5h1M1152 803.5h1M1154 803.5h1M1158 803.5h1M1159 804.5h1M1164 806.5h1M1168 803.5h1M1170 802.5h1M1173 844.5h1M1188 805.5h1M1189 803.5h1M1201 804.5h1M1215 804.5h1M1226 802.5h1M1228 802.5h1M1230 804.5h1M1231 801.5h1M1236 804.5h1M1236 823.5h1M1240 823.5h1M1241 793.5h1M1242 803.5h1M1243 803.5h1M1252 802.5h1M1260 794.5h1M1263 795.5h1M1265 804.5h1M1270 801.5h1M1274 803.5h1M1276 804.5h1M1278 804.5h1M1282 810.5h1M1290 802.5h1M1331 797.5h1M1334 799.5h1M1340 801.5h1M1341 844.5h1M1347 805.5h1M1352 804.5h1M1355 823.5h1M1360 803.5h1M1361 823.5h1M1364 804.5h1M1371 803.5h1M1372 798.5h1M1373 803.5h1M1377 805.5h1M1378 803.5h1M1386 804.5h1M1387 800.5h1M1388 805.5h1M1391 801.5h1M1396 805.5h1M1404 801.5h1M1422 802.5h1M1442 844.5h1M1445 823.5h1M1452 804.5h1M1467 804.5h1" stroke="#e4e436" stroke-width="1" fill="none" shape-rendering="crispEdges"/>
<polyline points="35.0,620.0 38.0,400.0 41.8,175.0 48.2,176.8 57.3,180.5 64.5,171.9 72.7,176.3 80.5,168.3 90.0,168.3 94.2,167.2 102.4,202.3 109.5,179.5 117.3,222.3 125.5,313.2 132.4,241.4 140.0,261.4 147.6,281.0 154.5,240.1 162.2,255.0 170.4,192.6 177.6,261.0 184.5,212.3 192.6,236.8 199.6,485.0 206.9,505.8 215.8,473.7 222.1,419.0 229.5,213.5 237.4,264.4 244.9,183.2 252.7,237.7 260.4,261.0 267.3,251.9 275.5,317.4 283.3,300.5 289.6,215.5 297.6,225.9 305.5,196.5 312.7,223.7 320.2,196.8 327.3,215.0 334.5,245.0 342.7,251.4 350.4,279.5 357.3,257.4 365.5,247.7 372.7,244.1 380.0,240.8 387.6,237.4 395.5,247.2 402.7,210.5 410.0,231.4 417.3,244.1 424.9,255.5 432.7,238.6 440.4,251.4 448.2,244.1 455.5,225.9 463.3,205.5 470.5,251.4 478.2,263.5 485.5,249.5 492.7,244.1 500.5,193.2 508.5,263.5 515.5,245.9 523.1,201.9 530.9,222.3 537.8,203.2 545.5,278.6 553.3,251.9 560.9,243.2 568.5,223.2 575.6,232.3 582.5,257.7 590.6,228.5 605.1,523.7 613.6,547.0 620.8,533.5 627.6,558.9 635.1,318.0 637.3,275.0 643.4,205.5 650.4,242.3 658.2,253.2 666.0,245.5 672.7,272.3 680.9,254.1 688.2,213.5 696.0,221.4 703.6,255.0 710.9,289.9 718.2,285.9 725.5,268.6 733.3,252.6 740.9,242.3 748.5,224.6 755.8,231.4 763.6,224.6 770.9,223.7 778.7,211.7 786.0,224.1 793.6,313.2 801.3,213.5 808.2,209.0 816.0,221.4 823.6,303.2 830.5,240.5 838.5,211.0 846.4,241.0 853.6,234.6 860.9,226.8 868.5,214.6 876.4,243.2 883.6,255.4 891.5,226.8 898.7,217.4 906.4,245.0 914.2,251.4 920.9,251.4 928.7,203.7 936.4,238.6 943.6,199.5 951.5,203.7 958.7,256.3 966.4,247.7 973.6,235.9 981.3,230.5 988.5,237.4 996.4,220.8 1003.6,259.5 1010.9,277.2 1018.5,195.4 1026.0,244.1 1033.6,273.2 1041.5,232.8 1049.1,263.5 1056.4,235.5 1063.6,254.1 1070.9,216.8 1079.1,203.7 1086.4,232.8 1093.6,219.5 1100.9,207.4 1109.1,242.3 1116.4,239.5 1123.6,231.9 1131.5,260.1 1139.5,188.6 1146.4,197.7 1154.0,248.6 1161.5,219.5 1168.7,235.9 1176.4,213.5 1184.5,238.6 1191.8,228.6 1199.1,218.3 1206.7,272.3 1214.2,263.2 1221.8,220.5 1229.1,289.5 1236.4,320.0 1243.6,280.5 1251.8,263.5 1258.5,238.1 1266.4,269.5 1274.0,255.9 1281.5,256.8 1289.1,245.0 1296.7,242.3 1304.2,251.0 1311.5,252.6 1319.5,201.7 1326.7,227.7 1334.2,230.1 1341.8,202.6 1349.1,212.3 1356.7,229.5 1364.5,266.8 1371.8,249.5 1379.1,233.2 1386.9,215.5 1394.5,247.7 1401.8,258.6 1409.1,246.8 1416.7,237.4 1424.5,236.3 1431.8,265.9 1439.5,248.3 1446.7,251.9 1454.5,280.5 1462.2,261.4 1469.5,228.3 1477.3,249.5 1484.2,261.9 1491.4,232.4 1499.6,214.6 1506.5,268.0 1514.3,263.6 1522.5,222.4 1529.5,181.2" fill="none" stroke="#36b6e0" stroke-width="1.08" stroke-linejoin="round"/>
</svg>
<div class="t" style="left:20.21px;top:760.84px;font-size:10.0px;line-height:13px;color:#000;font-family:'Liberation Sans',sans-serif;transform:scaleX(0.9250);transform-origin:0 50%;">50</div>
<div class="t" style="left:1533.60px;top:760.84px;font-size:10.0px;line-height:13px;color:#000;font-family:'Liberation Sans',sans-serif;transform:scaleX(0.9250);transform-origin:0 50%;">0.50</div>
<div class="t" style="left:15.07px;top:656.49px;font-size:10.0px;line-height:13px;color:#000;font-family:'Liberation Sans',sans-serif;transform:scaleX(0.9250);transform-origin:0 50%;">100</div>
<div class="t" style="left:1533.60px;top:656.49px;font-size:10.0px;line-height:13px;color:#000;font-family:'Liberation Sans',sans-serif;transform:scaleX(0.9250);transform-origin:0 50%;">1.00</div>
<div class="t" style="left:15.07px;top:552.13px;font-size:10.0px;line-height:13px;color:#000;font-family:'Liberation Sans',sans-serif;transform:scaleX(0.9250);transform-origin:0 50%;">150</div>
<div class="t" style="left:1533.60px;top:552.13px;font-size:10.0px;line-height:13px;color:#000;font-family:'Liberation Sans',sans-serif;transform:scaleX(0.9250);transform-origin:0 50%;">1.50</div>
<div class="t" style="left:15.07px;top:447.77px;font-size:10.0px;line-height:13px;color:#000;font-family:'Liberation Sans',sans-serif;transform:scaleX(0.9250);transform-origin:0 50%;">200</div>
<div class="t" style="left:1533.60px;top:447.77px;font-size:10.0px;line-height:13px;color:#000;font-family:'Liberation Sans',sans-serif;transform:scaleX(0.9250);transform-origin:0 50%;">2.00</div>
<div class="t" style="left:15.07px;top:343.41px;font-size:10.0px;line-height:13px;color:#000;font-family:'Liberation Sans',sans-serif;transform:scaleX(0.9250);transform-origin:0 50%;">250</div>
<div class="t" style="left:1533.60px;top:343.41px;font-size:10.0px;line-height:13px;color:#000;font-family:'Liberation Sans',sans-serif;transform:scaleX(0.9250);transform-origin:0 50%;">2.50</div>
<div class="t" style="left:15.07px;top:239.06px;font-size:10.0px;line-height:13px;color:#000;font-family:'Liberation Sans',sans-serif;transform:scaleX(0.9250);transform-origin:0 50%;">300</div>
<div class="t" style="left:1533.60px;top:239.06px;font-size:10.0px;line-height:13px;color:#000;font-family:'Liberation Sans',sans-serif;transform:scaleX(0.9250);transform-origin:0 50%;">3.00</div>
<div class="t" style="left:15.07px;top:134.70px;font-size:10.0px;line-height:13px;color:#000;font-family:'Liberation Sans',sans-serif;transform:scaleX(0.9250);transform-origin:0 50%;">350</div>
<div class="t" style="left:1533.60px;top:134.70px;font-size:10.0px;line-height:13px;color:#000;font-family:'Liberation Sans',sans-serif;transform:scaleX(0.9250);transform-origin:0 50%;">3.50</div>
<div class="t" style="left:32.02px;top:875.10px;font-size:10.0px;line-height:13px;color:#000;font-family:'Liberation Sans',sans-serif;">0</div>
<div class="t" style="left:173.85px;top:875.10px;font-size:10.0px;line-height:13px;color:#000;font-family:'Liberation Sans',sans-serif;transform:scaleX(0.9250);transform-origin:0 50%;">1000</div>
<div class="t" style="left:323.29px;top:875.10px;font-size:10.0px;line-height:13px;color:#000;font-family:'Liberation Sans',sans-serif;transform:scaleX(0.9250);transform-origin:0 50%;">2000</div>
<div class="t" style="left:472.73px;top:875.10px;font-size:10.0px;line-height:13px;color:#000;font-family:'Liberation Sans',sans-serif;transform:scaleX(0.9250);transform-origin:0 50%;">3000</div>
<div class="t" style="left:622.17px;top:875.10px;font-size:10.0px;line-height:13px;color:#000;font-family:'Liberation Sans',sans-serif;transform:scaleX(0.9250);transform-origin:0 50%;">4000</div>
<div class="t" style="left:771.61px;top:875.10px;font-size:10.0px;line-height:13px;color:#000;font-family:'Liberation Sans',sans-serif;transform:scaleX(0.9250);transform-origin:0 50%;">5000</div>
<div class="t" style="left:921.05px;top:875.10px;font-size:10.0px;line-height:13px;color:#000;font-family:'Liberation Sans',sans-serif;transform:scaleX(0.9250);transform-origin:0 50%;">6000</div>
<div class="t" style="left:1070.49px;top:875.10px;font-size:10.0px;line-height:13px;color:#000;font-family:'Liberation Sans',sans-serif;transform:scaleX(0.9250);transform-origin:0 50%;">7000</div>
<div class="t" style="left:1219.93px;top:875.10px;font-size:10.0px;line-height:13px;color:#000;font-family:'Liberation Sans',sans-serif;transform:scaleX(0.9250);transform-origin:0 50%;">8000</div>
<div class="t" style="left:1369.37px;top:875.10px;font-size:10.0px;line-height:13px;color:#000;font-family:'Liberation Sans',sans-serif;transform:scaleX(0.9250);transform-origin:0 50%;">9000</div>
<div class="t" style="left:1509.60px;top:875.10px;font-size:10.0px;line-height:13px;color:#000;font-family:'Liberation Sans',sans-serif;transform:scaleX(0.9063);transform-origin:0 50%;">10000mB</div>
<div class="t" style="left:34.40px;top:129.00px;font-size:10.0px;line-height:13px;color:#000;font-family:'Liberation Sans',sans-serif;transform:scaleX(0.9307);transform-origin:0 50%;">MB/s</div>
<div class="t" style="left:1517.60px;top:129.40px;font-size:10.0px;line-height:13px;color:#000;font-family:'Liberation Sans',sans-serif;transform:scaleX(0.9152);transform-origin:0 50%;">ms</div>
<div class="t" style="left:37.20px;top:141.40px;font-size:10.0px;line-height:13px;color:#d4d4d4;font-family:'Liberation Sans',sans-serif;transform:scaleX(0.9505);transform-origin:0 50%;">trial version</div>
<div class="b" style="left:1567.00px;top:125.10px;width:63.00px;height:17.80px;background:#e1e1e1;border:1.5px solid #1c5ab8;box-shadow:inset 0 0 0 1px #cfe6f8"></div>
<div class="t" style="left:1588.75px;top:127.80px;font-size:10.1px;line-height:13px;color:#000;font-family:'Liberation Sans',sans-serif;transform:scaleX(0.8579);transform-origin:0 50%;">Start</div>
<div class="b" style="left:1559.00px;top:151.70px;width:87.40px;height:1.00px;background:#a9a9a9"></div>
<div class="b" style="left:1559.00px;top:185.30px;width:87.40px;height:1.00px;background:#a9a9a9"></div>
<div class="b" style="left:1559.00px;top:248.00px;width:87.40px;height:1.00px;background:#a9a9a9"></div>
<div class="b" style="left:1559.00px;top:338.00px;width:87.40px;height:1.00px;background:#a9a9a9"></div>
<svg width="1650" height="898"><circle cx="1568.6" cy="162.4" r="5" fill="#fff" stroke="#2a2a2a" stroke-width="1"/><circle cx="1568.6" cy="162.4" r="2.8" fill="#2a2a2a"/></svg>
<svg width="1650" height="898"><circle cx="1568.6" cy="176.3" r="5" fill="#fff" stroke="#2a2a2a" stroke-width="1"/></svg>
<div class="t" style="left:1577.90px;top:156.40px;font-size:10.1px;line-height:13px;color:#000;font-family:'Liberation Sans',sans-serif;transform:scaleX(0.8780);transform-origin:0 50%;">Read</div>
<div class="t" style="left:1577.90px;top:170.20px;font-size:10.1px;line-height:13px;color:#000;font-family:'Liberation Sans',sans-serif;transform:scaleX(0.8725);transform-origin:0 50%;">Write</div>
<div class="b" style="left:1563.10px;top:192.40px;width:11.60px;height:11.20px;background:#fff;border:1.1px solid #2c2c2c;border-radius:0.8px"></div>
<svg width="1650" height="898"><path d="M1565.8 197.8 L1568.2 200.6 L1572.6 195.4" fill="none" stroke="#222" stroke-width="1.1"/></svg>
<div class="t" style="left:1577.70px;top:192.10px;font-size:10.1px;line-height:13px;color:#000;font-family:'Liberation Sans',sans-serif;transform:scaleX(0.8852);transform-origin:0 50%;">Short stroke</div>
<div class="b" style="left:1563.10px;top:210.10px;width:53.70px;height:16.70px;background:#fff;border:1px solid #7a7a7a"></div>
<div class="t" style="left:1566.70px;top:212.05px;font-size:10.1px;line-height:13px;color:#000;font-family:'Liberation Sans',sans-serif;transform:scaleX(0.9000);transform-origin:0 50%;">10</div>
<div class="b" style="left:1603.20px;top:211.70px;width:12.20px;height:13.50px;background:#f0f0f0;border:1px solid #c6c6c6"></div>
<div class="b" style="left:1603.20px;top:217.95px;width:12.20px;height:1.00px;background:#c6c6c6"></div>
<svg width="1650" height="898"><path d="M1607.1 216.25 L1609.3 213.85 L1611.5 216.25Z M1607.1 220.85 L1609.3 223.25 L1611.5 220.85Z" fill="#222"/></svg>
<div class="t" style="left:1626.20px;top:212.00px;font-size:10.1px;line-height:13px;color:#000;font-family:'Liberation Sans',sans-serif;transform:scaleX(0.8904);transform-origin:0 50%;">gB</div>
<div class="b" style="left:1563.10px;top:234.90px;width:11.60px;height:11.20px;background:#fff;border:1.1px solid #2c2c2c;border-radius:0.8px"></div>
<svg width="1650" height="898"><path d="M1565.8 240.3 L1568.2 243.1 L1572.6 237.9" fill="none" stroke="#222" stroke-width="1.1"/></svg>
<div class="t" style="left:1577.70px;top:234.50px;font-size:10.1px;line-height:13px;color:#000;font-family:'Liberation Sans',sans-serif;transform:scaleX(0.8879);transform-origin:0 50%;">Transfer rate</div>
<div class="t" style="left:1563.90px;top:250.00px;font-size:10.1px;line-height:13px;color:#000;font-family:'Liberation Sans',sans-serif;transform:scaleX(0.8300);transform-origin:0 50%;">Minimum</div>
<div class="b" style="left:1563.90px;top:264.10px;width:79.00px;height:12.10px;background:#000"></div>
<div class="t" style="left:1575.60px;top:262.75px;font-size:10.8px;line-height:14px;color:#33bfe8;font-family:'Liberation Sans',sans-serif;transform:scaleX(1.0030);transform-origin:0 50%;font-weight:bold;">120.7 MB/s</div>
<div class="t" style="left:1563.90px;top:278.90px;font-size:10.1px;line-height:13px;color:#000;font-family:'Liberation Sans',sans-serif;transform:scaleX(0.8362);transform-origin:0 50%;">Maximum</div>
<div class="b" style="left:1563.90px;top:292.00px;width:79.00px;height:11.80px;background:#000"></div>
<div class="t" style="left:1575.60px;top:290.50px;font-size:10.8px;line-height:14px;color:#33bfe8;font-family:'Liberation Sans',sans-serif;transform:scaleX(1.0030);transform-origin:0 50%;font-weight:bold;">337.3 MB/s</div>
<div class="t" style="left:1563.90px;top:304.70px;font-size:10.1px;line-height:13px;color:#000;font-family:'Liberation Sans',sans-serif;transform:scaleX(0.8921);transform-origin:0 50%;">Average</div>
<div class="b" style="left:1563.90px;top:318.60px;width:79.00px;height:12.10px;background:#000"></div>
<div class="t" style="left:1575.60px;top:317.25px;font-size:10.8px;line-height:14px;color:#33bfe8;font-family:'Liberation Sans',sans-serif;transform:scaleX(1.0030);transform-origin:0 50%;font-weight:bold;">297.5 MB/s</div>
<div class="b" style="left:1563.10px;top:343.60px;width:11.60px;height:11.20px;background:#fff;border:1.1px solid #2c2c2c;border-radius:0.8px"></div>
<svg width="1650" height="898"><path d="M1565.8 349.0 L1568.2 351.8 L1572.6 346.59999999999997" fill="none" stroke="#222" stroke-width="1.1"/></svg>
<div class="t" style="left:1577.50px;top:343.00px;font-size:10.1px;line-height:13px;color:#000;font-family:'Liberation Sans',sans-serif;transform:scaleX(0.8945);transform-origin:0 50%;">Access time</div>
<div class="b" style="left:1563.90px;top:356.80px;width:79.00px;height:11.80px;background:#000"></div>
<div class="t" style="left:1581.85px;top:355.30px;font-size:10.8px;line-height:14px;color:#f0f032;font-family:'Liberation Sans',sans-serif;transform:scaleX(0.9532);transform-origin:0 50%;font-weight:bold;">0.322 ms</div>
<div class="b" style="left:1563.10px;top:373.20px;width:11.60px;height:11.20px;background:#fff;border:1.1px solid #2c2c2c;border-radius:0.8px"></div>
<svg width="1650" height="898"><path d="M1565.8 378.6 L1568.2 381.40000000000003 L1572.6 376.2" fill="none" stroke="#222" stroke-width="1.1"/></svg>
<div class="t" style="left:1577.50px;top:372.60px;font-size:10.1px;line-height:13px;color:#000;font-family:'Liberation Sans',sans-serif;transform:scaleX(0.8633);transform-origin:0 50%;">Burst rate</div>
<div class="b" style="left:1563.90px;top:386.30px;width:79.00px;height:12.00px;background:#000"></div>
<div class="t" style="left:1575.60px;top:384.90px;font-size:10.8px;line-height:14px;color:#f4f4e6;font-family:'Liberation Sans',sans-serif;transform:scaleX(1.0138);transform-origin:0 50%;font-weight:bold;">117.6 MB/s</div>
<div class="t" style="left:1563.90px;top:401.10px;font-size:10.1px;line-height:13px;color:#000;font-family:'Liberation Sans',sans-serif;transform:scaleX(0.8829);transform-origin:0 50%;">CPU usage</div>
<div class="b" style="left:1563.90px;top:415.20px;width:79.00px;height:12.00px;background:#000"></div>
<div class="t" style="left:1592.10px;top:413.80px;font-size:10.8px;line-height:14px;color:#fff;font-family:'Liberation Sans',sans-serif;transform:scaleX(0.9343);transform-origin:0 50%;font-weight:bold;">1.2%</div>
<div class="t" style="left:1563.90px;top:439.40px;font-size:10.1px;line-height:13px;color:#000;font-family:'Liberation Sans',sans-serif;transform:scaleX(0.8821);transform-origin:0 50%;">Number of passes</div>
<div class="b" style="left:1563.40px;top:452.00px;width:67.20px;height:16.50px;background:#fff;border:1px solid #7a7a7a"></div>
<div class="t" style="left:1567.00px;top:453.85px;font-size:10.1px;line-height:13px;color:#000;font-family:'Liberation Sans',sans-serif;">1</div>
<div class="b" style="left:1617.00px;top:453.60px;width:12.20px;height:13.30px;background:#f0f0f0;border:1px solid #c6c6c6"></div>
<div class="b" style="left:1617.00px;top:459.75px;width:12.20px;height:1.00px;background:#c6c6c6"></div>
<svg width="1650" height="898"><path d="M1620.8999999999999 458.05 L1623.1 455.65 L1625.3 458.05Z M1620.8999999999999 462.65 L1623.1 465.05 L1625.3 462.65Z" fill="#222"/></svg>
<div class="b" style="left:1563.90px;top:476.50px;width:45.80px;height:10.00px;background:#14b238"></div>
<div class="t" style="left:1615.70px;top:475.70px;font-size:10.1px;line-height:13px;color:#000;font-family:'Liberation Sans',sans-serif;transform:scaleX(0.9473);transform-origin:0 50%;">1/1</div>
<div class="b" style="left:1649.20px;top:75.50px;width:0.80px;height:822.50px;background:#fafafa"></div>
<div class="b" style="left:950.10px;top:385.80px;width:348.10px;height:317.60px;background:#fff;border:1px solid #7cc4ea;box-shadow:0 2px 9px rgba(0,0,0,0.55)"></div>
<div class="t" style="left:971.40px;top:389.50px;font-size:10.6px;line-height:14px;color:#000;font-family:'Liberation Sans',sans-serif;transform:scaleX(0.9296);transform-origin:0 50%;">CrystalDiskMark 6.0.2 x64</div>
<svg width="1650" height="898"><path d="M1194 397.3h8.8" stroke="#111" stroke-width="1"/><rect x="1233.5" y="393.2" width="7.8" height="7.6" fill="none" stroke="#c8c8c8" stroke-width="1"/><path d="M1273.2 393 l8.6 8.6 M1281.8 393 l-8.6 8.6" stroke="#111" stroke-width="1.1"/></svg>
<div class="t" style="left:956.00px;top:409.70px;font-size:10.4px;line-height:14px;color:#111;font-family:'Liberation Sans',sans-serif;transform:scaleX(1.0443);transform-origin:0 50%;">Файл</div>
<div class="t" style="left:993.70px;top:409.70px;font-size:10.4px;line-height:14px;color:#111;font-family:'Liberation Sans',sans-serif;transform:scaleX(1.0373);transform-origin:0 50%;">Настройки</div>
<div class="t" style="left:1057.60px;top:409.70px;font-size:10.4px;line-height:14px;color:#111;font-family:'Liberation Sans',sans-serif;transform:scaleX(1.0258);transform-origin:0 50%;">Вид</div>
<div class="t" style="left:1086.80px;top:409.70px;font-size:10.4px;line-height:14px;color:#111;font-family:'Liberation Sans',sans-serif;transform:scaleX(1.1053);transform-origin:0 50%;">Помощь</div>
<div class="t" style="left:1141.70px;top:409.70px;font-size:10.4px;line-height:14px;color:#111;font-family:'Liberation Sans',sans-serif;transform:scaleX(0.9922);transform-origin:0 50%;">Язык(Language)</div>
<div class="b" style="left:951.10px;top:424.40px;width:346.10px;height:0.80px;background:#ececec"></div>
<div class="b" style="left:962.40px;top:432.70px;width:53.20px;height:42.70px;background:linear-gradient(#e4f0dc 0%,#b2dc94 13%,#6cc82e 36%,#54bc10 56%,#64d60e 80%,#84f020 100%);border:1px solid #7d8f74;box-shadow:inset 0 0 0 1px rgba(255,255,255,0.45)"></div>
<div class="t" style="left:980.30px;top:445.05px;font-size:15px;line-height:20px;color:#0a1a00;font-family:'DejaVu Sans',sans-serif;transform:scaleX(0.8405);transform-origin:0 50%;font-weight:bold;">All</div>
<div class="b" style="left:1019.20px;top:435.10px;width:30.70px;height:17.30px;background:#fff;border:1px solid #767676;box-shadow:inset 0 0 0 1px #e8e8e8"></div>
<div class="t" style="left:1022.00px;top:438.10px;font-size:11.8px;line-height:15px;color:#111;font-family:'DejaVu Sans',sans-serif;">5</div>
<svg width="1650" height="898"><path d="M1036.9 441.2 L1041.3000000000002 446 L1045.7000000000003 441.2" fill="none" stroke="#111" stroke-width="1.25"/></svg>
<div class="b" style="left:1054.80px;top:435.10px;width:69.10px;height:17.30px;background:#fff;border:1px solid #767676;box-shadow:inset 0 0 0 1px #e8e8e8"></div>
<div class="t" style="left:1057.60px;top:438.10px;font-size:11.8px;line-height:15px;color:#111;font-family:'DejaVu Sans',sans-serif;transform:scaleX(0.9456);transform-origin:0 50%;">1GiB</div>
<svg width="1650" height="898"><path d="M1110.9 441.2 L1115.3000000000002 446 L1119.7000000000003 441.2" fill="none" stroke="#111" stroke-width="1.25"/></svg>
<div class="b" style="left:1128.40px;top:435.10px;width:157.40px;height:17.30px;background:#fff;border:1px solid #767676;box-shadow:inset 0 0 0 1px #e8e8e8"></div>
<div class="t" style="left:1131.20px;top:438.10px;font-size:11.8px;line-height:15px;color:#111;font-family:'DejaVu Sans',sans-serif;transform:scaleX(0.9423);transform-origin:0 50%;">C: 77% (173/223GiB)</div>
<svg width="1650" height="898"><path d="M1272.8 441.2 L1277.2 446 L1281.6000000000001 441.2" fill="none" stroke="#111" stroke-width="1.25"/></svg>
<div class="t" style="left:1039.65px;top:458.10px;font-size:14px;line-height:18px;color:#111;font-family:'DejaVu Sans',sans-serif;transform:scaleX(0.9585);transform-origin:0 50%;font-weight:bold;">Read [MB/s]</div>
<div class="t" style="left:1173.40px;top:458.10px;font-size:14px;line-height:18px;color:#111;font-family:'DejaVu Sans',sans-serif;transform:scaleX(0.9432);transform-origin:0 50%;font-weight:bold;">Write [MB/s]</div>
<div class="b" style="left:962.40px;top:479.30px;width:53.20px;height:43.00px;background:linear-gradient(#e4f0dc 0%,#b2dc94 13%,#6cc82e 36%,#54bc10 56%,#64d60e 80%,#84f020 100%);border:1px solid #7d8f74;box-shadow:inset 0 0 0 1px rgba(255,255,255,0.45)"></div>
<div class="t" style="left:979.06px;top:488.00px;font-size:9.4px;line-height:12px;color:#0a1a00;font-family:'DejaVu Sans',sans-serif;font-weight:bold;">Seq</div>
<div class="t" style="left:971.99px;top:500.40px;font-size:9.4px;line-height:12px;color:#0a1a00;font-family:'DejaVu Sans',sans-serif;font-weight:bold;">Q32T1</div>
<div class="b" style="left:1019.60px;top:479.30px;width:131.20px;height:43.00px;background:#fff;border:1px solid #c2c2c2"></div>
<div class="b" style="left:1020.60px;top:480.30px;width:94.30px;height:41.00px;background:linear-gradient(#dcecd4 0%,#b0dc94 28%,#84d84a 62%,#8ee844 100%);border-right:1px solid #5da52a"></div>
<div class="t" style="left:1021.30px;top:481.00px;font-size:34.2px;line-height:40px;color:#161616;font-family:'DejaVu Sans',sans-serif;transform:scaleX(0.9891);transform-origin:0 50%;font-weight:bold;">464.9</div>
<div class="b" style="left:1154.60px;top:479.30px;width:131.20px;height:43.00px;background:#fff;border:1px solid #c2c2c2"></div>
<div class="b" style="left:1155.60px;top:480.30px;width:91.20px;height:41.00px;background:linear-gradient(#dcecd4 0%,#b0dc94 28%,#84d84a 62%,#8ee844 100%);border-right:1px solid #5da52a"></div>
<div class="t" style="left:1156.80px;top:481.00px;font-size:34.2px;line-height:40px;color:#161616;font-family:'DejaVu Sans',sans-serif;transform:scaleX(0.9753);transform-origin:0 50%;font-weight:bold;">357.9</div>
<div class="b" style="left:962.40px;top:526.30px;width:53.20px;height:43.00px;background:linear-gradient(#e4f0dc 0%,#b2dc94 13%,#6cc82e 36%,#54bc10 56%,#64d60e 80%,#84f020 100%);border:1px solid #7d8f74;box-shadow:inset 0 0 0 1px rgba(255,255,255,0.45)"></div>
<div class="t" style="left:976.89px;top:535.00px;font-size:9.4px;line-height:12px;color:#0a1a00;font-family:'DejaVu Sans',sans-serif;font-weight:bold;">4KiB</div>
<div class="t" style="left:975.26px;top:547.40px;font-size:9.4px;line-height:12px;color:#0a1a00;font-family:'DejaVu Sans',sans-serif;font-weight:bold;">Q8T8</div>
<div class="b" style="left:1019.60px;top:526.30px;width:131.20px;height:43.00px;background:#fff;border:1px solid #c2c2c2"></div>
<div class="b" style="left:1020.60px;top:527.30px;width:49.00px;height:41.00px;background:linear-gradient(#dcecd4 0%,#b0dc94 28%,#84d84a 62%,#8ee844 100%);border-right:1px solid #5da52a"></div>
<div class="t" style="left:1021.30px;top:528.00px;font-size:34.2px;line-height:40px;color:#161616;font-family:'DejaVu Sans',sans-serif;transform:scaleX(0.9891);transform-origin:0 50%;font-weight:bold;">9.002</div>
<div class="b" style="left:1154.60px;top:526.30px;width:131.20px;height:43.00px;background:#fff;border:1px solid #c2c2c2"></div>
<div class="b" style="left:1155.60px;top:527.30px;width:54.00px;height:41.00px;background:linear-gradient(#dcecd4 0%,#b0dc94 28%,#84d84a 62%,#8ee844 100%);border-right:1px solid #5da52a"></div>
<div class="t" style="left:1156.80px;top:528.00px;font-size:34.2px;line-height:40px;color:#161616;font-family:'DejaVu Sans',sans-serif;transform:scaleX(0.9753);transform-origin:0 50%;font-weight:bold;">13.54</div>
<div class="b" style="left:962.40px;top:573.20px;width:53.20px;height:43.00px;background:linear-gradient(#e4f0dc 0%,#b2dc94 13%,#6cc82e 36%,#54bc10 56%,#64d60e 80%,#84f020 100%);border:1px solid #7d8f74;box-shadow:inset 0 0 0 1px rgba(255,255,255,0.45)"></div>
<div class="t" style="left:976.89px;top:581.90px;font-size:9.4px;line-height:12px;color:#0a1a00;font-family:'DejaVu Sans',sans-serif;font-weight:bold;">4KiB</div>
<div class="t" style="left:971.99px;top:594.30px;font-size:9.4px;line-height:12px;color:#0a1a00;font-family:'DejaVu Sans',sans-serif;font-weight:bold;">Q32T1</div>
<div class="b" style="left:1019.60px;top:573.20px;width:131.20px;height:43.00px;background:#fff;border:1px solid #c2c2c2"></div>
<div class="b" style="left:1020.60px;top:574.20px;width:49.00px;height:41.00px;background:linear-gradient(#dcecd4 0%,#b0dc94 28%,#84d84a 62%,#8ee844 100%);border-right:1px solid #5da52a"></div>
<div class="t" style="left:1021.30px;top:574.90px;font-size:34.2px;line-height:40px;color:#161616;font-family:'DejaVu Sans',sans-serif;transform:scaleX(0.9891);transform-origin:0 50%;font-weight:bold;">8.960</div>
<div class="b" style="left:1154.60px;top:573.20px;width:131.20px;height:43.00px;background:#fff;border:1px solid #c2c2c2"></div>
<div class="b" style="left:1155.60px;top:574.20px;width:64.10px;height:41.00px;background:linear-gradient(#dcecd4 0%,#b0dc94 28%,#84d84a 62%,#8ee844 100%);border-right:1px solid #5da52a"></div>
<div class="t" style="left:1156.80px;top:574.90px;font-size:34.2px;line-height:40px;color:#161616;font-family:'DejaVu Sans',sans-serif;transform:scaleX(0.9753);transform-origin:0 50%;font-weight:bold;">33.32</div>
<div class="b" style="left:962.40px;top:620.20px;width:53.20px;height:43.00px;background:linear-gradient(#e4f0dc 0%,#b2dc94 13%,#6cc82e 36%,#54bc10 56%,#64d60e 80%,#84f020 100%);border:1px solid #7d8f74;box-shadow:inset 0 0 0 1px rgba(255,255,255,0.45)"></div>
<div class="t" style="left:976.89px;top:628.90px;font-size:9.4px;line-height:12px;color:#0a1a00;font-family:'DejaVu Sans',sans-serif;font-weight:bold;">4KiB</div>
<div class="t" style="left:975.26px;top:641.30px;font-size:9.4px;line-height:12px;color:#0a1a00;font-family:'DejaVu Sans',sans-serif;font-weight:bold;">Q1T1</div>
<div class="b" style="left:1019.60px;top:620.20px;width:131.20px;height:43.00px;background:#fff;border:1px solid #c2c2c2"></div>
<div class="b" style="left:1020.60px;top:621.20px;width:48.40px;height:41.00px;background:linear-gradient(#dcecd4 0%,#b0dc94 28%,#84d84a 62%,#8ee844 100%);border-right:1px solid #5da52a"></div>
<div class="t" style="left:1021.30px;top:621.90px;font-size:34.2px;line-height:40px;color:#161616;font-family:'DejaVu Sans',sans-serif;transform:scaleX(0.9891);transform-origin:0 50%;font-weight:bold;">8.332</div>
<div class="b" style="left:1154.60px;top:620.20px;width:131.20px;height:43.00px;background:#fff;border:1px solid #c2c2c2"></div>
<div class="b" style="left:1155.60px;top:621.20px;width:59.10px;height:41.00px;background:linear-gradient(#dcecd4 0%,#b0dc94 28%,#84d84a 62%,#8ee844 100%);border-right:1px solid #5da52a"></div>
<div class="t" style="left:1156.80px;top:621.90px;font-size:34.2px;line-height:40px;color:#161616;font-family:'DejaVu Sans',sans-serif;transform:scaleX(0.9753);transform-origin:0 50%;font-weight:bold;">21.34</div>
<div class="b" style="left:962.40px;top:670.70px;width:323.40px;height:24.90px;background:#fff;border:1px solid #9a9a9a"></div>
<svg width="1650" height="898" viewBox="0 0 1650 898">
<defs><linearGradient id="pg" x1="0" y1="0" x2="0" y2="1"><stop offset="0" stop-color="#8a0a9c"/><stop offset="0.5" stop-color="#c22ad0"/><stop offset="1" stop-color="#b218c4"/></linearGradient><linearGradient id="ig" x1="0" y1="0" x2="1" y2="0"><stop offset="0" stop-color="#2a8cf0"/><stop offset="1" stop-color="#0a2ab0"/></linearGradient><linearGradient id="fg" x1="0" y1="0" x2="1" y2="1"><stop offset="0" stop-color="#f8e060"/><stop offset="1" stop-color="#d8a800"/></linearGradient><linearGradient id="tg" x1="0" y1="0" x2="1" y2="0"><stop offset="0" stop-color="#bdbdbd"/><stop offset="0.35" stop-color="#6a6a6a"/><stop offset="0.6" stop-color="#1e1e1e"/><stop offset="1" stop-color="#555"/></linearGradient></defs>
<g transform="translate(-2.2,0.3)"><path d="M0.5 8.5 L6 3.5 L12.5 6 L12.5 9 L6.5 14.5 L0.5 11.5Z" fill="#4a3a22" stroke="#2a2010" stroke-width="0.8"/><path d="M1 8 L6 3.8 L12 6.2 L6.6 11.2Z" fill="#e8dcc0"/><circle cx="6.6" cy="7.6" r="1.6" fill="#b89858"/></g>
<path d="M1555 8.8h8.6" stroke="#a8a8a8" stroke-width="1"/><path d="M1593.8 6.4h6.6v6.4h-6.6z M1595.8 6.2v-2h6.6v6.4h-1.8" fill="none" stroke="#a0a0a0" stroke-width="1"/><path d="M1633.6 4.6l8.8 8.8M1642.4 4.6l-8.8 8.8" stroke="#a0a0a0" stroke-width="1"/>
<path d="M18.7 80.7c2.0 0 3.0 1.4 3.0 3.1 0 1.7-1.1 3.2-1.4 4.8h-3.2c-0.3-1.6-1.4-3.1-1.4-4.8 0-1.7 1.0-3.1 3.0-3.1z" fill="#dcdc24" stroke="#5c5c0c" stroke-width="1.2"/><ellipse cx="18.7" cy="91.5" rx="2.5" ry="1.7" fill="#dcdc24" stroke="#5c5c0c" stroke-width="1.2"/><path d="M17.4 82.6c0.4-0.7 1.2-1 2-0.9" stroke="#ffffd8" stroke-width="0.9" fill="none"/>
<circle cx="96.2" cy="82.5" r="2.2" fill="#30b0e8" stroke="#0a2c6c" stroke-width="0.9"/><path d="M93.4 86.4h4.9v6h1.7v2.3h-7.8v-2.3h2.1v-3.7h-0.9z" fill="url(#ig)" stroke="#0a1450" stroke-width="0.9"/>
<path d="M139.8 81.2h4.8v4.2h4.6v4.8h-4.6v4.4h-4.8v-4.4h-4.4v-4.8h4.4z" fill="#e01c24" stroke="#8c0a10" stroke-width="0.9"/><path d="M140.6 82.2h3.2M136.2 86.4h3.6" stroke="#ff9a9a" stroke-width="0.9"/>
<path d="M200.8 88.2l5.4 5" stroke="#0c1470" stroke-width="3" stroke-linecap="round"/><circle cx="197.2" cy="84.6" r="4.1" fill="#38d848" stroke="#1a5a2a" stroke-width="1.2"/><path d="M194.8 83.6c0.5-1.2 1.6-1.9 2.8-1.9" stroke="#d8ffd8" stroke-width="0.9" fill="none"/>
<path d="M266.8 83h3.4l1.2-1.6h4.4l1 1.6h2.2v10.8h-12.2z" fill="#e8c020" stroke="#4a3a00" stroke-width="0.9"/><path d="M268.4 85h10.4v8.6h-10.4z" fill="url(#fg)" stroke="#6a5200" stroke-width="0.7"/>
<path d="M351.2 81.8h12v2h-12z" fill="#2e2e2e" stroke="#0c0c0c" stroke-width="0.7"/><path d="M360.6 80.6h2.4v1.4h-2.4z" fill="#222"/><path d="M352.2 83.8h10.2l-0.5 10.6h-9.2z" fill="url(#tg)" stroke="#0c0c0c" stroke-width="0.9"/><path d="M355 85v8.4M358 85v8.4" stroke="#2a2a2a" stroke-width="0.6" opacity="0.6"/>
<path d="M405 81h7.8l3.8 3.4v10h-11.6z" fill="#fff" stroke="#0c0c0c" stroke-width="1.3"/><path d="M412.8 81v3.4h3.8" fill="none" stroke="#0c0c0c" stroke-width="0.9"/><path d="M410.4 82.4c1.6 0 2.4 1 2.4 2.4 0 1.3-1.1 2.5-1.4 3.9h-2c-0.3-1.4-1.4-2.6-1.4-3.9 0-1.4 0.8-2.4 2.4-2.4z" fill="#d838d8" stroke="#5a085a" stroke-width="0.9"/><ellipse cx="410.4" cy="91.4" rx="1.4" ry="1.1" fill="#d838d8" stroke="#5a085a" stroke-width="0.8"/>
<rect x="498.4" y="81.2" width="13.4" height="12.8" fill="#f4f0d8" stroke="#141414" stroke-width="1.4"/><path d="M498.4 81h13.4v1.6h-13.4z" fill="#141414"/><path d="M499.4 93.4v-5l1.6-2.2 1.4 3.2 1.8-5 1.8 3.6 1.6-2.8 1.6 3.2 1.6-2.4v7.4z" fill="#1eae38"/><path d="M502 93.4v-3.8h1.4v3.8zM506.4 93.4v-4.6h1.5v4.6zM509.2 93.4v-3h1.2v3z" fill="#1a48c0"/><path d="M499.4 93.4v-2.4h1.4v2.4zM504.2 93.4v-3.2h1.2v3.2z" fill="#0c6c20"/>
<path d="M579.8 85h2.8l4.2-3.8v11.8l-4.2-3.8h-2.8z" fill="#e4cc1c" stroke="#141400" stroke-width="1.2" stroke-linejoin="round"/><path d="M588.6 84.6c1 1.4 1 3.6 0 5M590.4 82.8c1.9 2.5 1.9 6.1 0 8.6" fill="none" stroke="#1a1a1a" stroke-width="1.2"/>
<rect x="629.6" y="81" width="13.2" height="13" fill="#f6ecc8" stroke="#1a1a1a" stroke-width="1.3"/><path d="M632 90.4h1.2M634.4 88h1.2M636.6 90.8h1.2M638.4 85.4h1.2M640 88.6h1.2M633 86h1.2M639.6 83.6h1.2M636 84.4h1.2" stroke="#d83018" stroke-width="1.1"/><path d="M631.2 92h10" stroke="#c8a800" stroke-width="0.8"/>
<rect x="727.6" y="81" width="13.2" height="13" fill="#f8f8f0" stroke="#1a1a1a" stroke-width="1.3"/><path d="M727.6 81h13.2v2.6h-13.2z" fill="#333"/><path d="M728.6 93.4v-5.4h1.8v5.4zM730.8 93.4v-3.6h1.6v3.6z" fill="#22b83a"/><path d="M733.6 86h6.2v6.6h-6.2z" fill="#fff" stroke="#8a1a1a" stroke-width="0.7"/><path d="M733.6 88.2h6.2M733.6 90.4h6.2M736.6 86v6.6" stroke="#8a1a1a" stroke-width="0.5"/>
<path d="M1381.9 48.2a2.1 2.1 0 0 1 4.2 0v6.9a2.9 2.9 0 1 1-4.2 0z" fill="#d4161e" stroke="#3a1414" stroke-width="1"/><path d="M1382.4 48.2a1.6 1.6 0 0 1 3.2 0v1.6h-3.2z" fill="#a8e4bc"/><path d="M1386.2 48.4v7a2.8 2.8 0 0 1-0.5 4.4" fill="none" stroke="#120808" stroke-width="1.1"/><path d="M1383.1 50.6v5" stroke="#ff8a8a" stroke-width="0.8"/><circle cx="1383" cy="57.6" r="0.8" fill="#ffd8d8"/>
<path d="M1466.6 47h6.4v10h-6.4z" fill="#fff" stroke="#0c0c0c" stroke-width="1.25"/><path d="M1468.0 49.2h3.4M1468.0 51.2h3.4M1468.0 53.2h3.4" stroke="#2a7ad8" stroke-width="1"/><path d="M1472.3999999999999 49.8h5l2.2 2v8h-7.2z" fill="#eef4ff" stroke="#0c0c0c" stroke-width="1.25"/><path d="M1473.8 52.6h3.8M1473.8 54.6h4.4M1473.8 56.6h4.4" stroke="#2a7ad8" stroke-width="1.1"/>
<path d="M1492.6 47h6.4v10h-6.4z" fill="#fff" stroke="#0c0c0c" stroke-width="1.25"/><path d="M1494.0 49.2h3.4M1494.0 51.2h3.4M1494.0 53.2h3.4" stroke="#2aa84a" stroke-width="1"/><path d="M1498.3999999999999 49.8h5l2.2 2v8h-7.2z" fill="#eef4ff" stroke="#0c0c0c" stroke-width="1.25"/><path d="M1499.8 52.6h3.8M1499.8 54.6h4.4M1499.8 56.6h4.4" stroke="#2aa84a" stroke-width="1.1"/>
<path d="M1518.8 50.4h2.6l1-1.8h4.6l1 1.8h2.8v7h-12z" fill="#1c1c1c"/><circle cx="1524.8" cy="53.8" r="2.3" fill="#1c1c1c" stroke="#e8e8e8" stroke-width="1"/>
<g fill="#e8d818" stroke="#4a4a00" stroke-width="0.9"><ellipse cx="1548.6" cy="50.8" rx="4" ry="2.8" transform="rotate(35 1548.6 50.8)"/><ellipse cx="1553.8" cy="55.8" rx="4.2" ry="3" transform="rotate(35 1553.8 55.8)"/></g><circle cx="1548.6" cy="50.8" r="1.1" fill="#5a5a10"/><circle cx="1553.8" cy="55.8" r="1.3" fill="#5a5a10"/>
<rect x="1573" y="44.6" width="16" height="17.4" rx="1.2" fill="url(#pg)" stroke="#6a0878" stroke-width="0.8"/><path d="M1579.6 47.6h2.8v6.6h3.2l-4.6 5.2-4.6-5.2h3.2z" fill="#fff"/>
<rect x="953.2" y="390.4" width="13.4" height="5.6" rx="0.8" fill="#48c828" stroke="#2a7a18" stroke-width="0.6"/><path d="M954 392h8" stroke="#b8f0a0" stroke-width="0.8"/><rect x="953.2" y="396.8" width="13.4" height="6.4" rx="0.8" fill="#d8d8d8" stroke="#8a8a8a" stroke-width="0.6"/><path d="M954.4 401h5" stroke="#888" stroke-width="0.8"/><circle cx="964" cy="400" r="0.9" fill="#3ac83a"/>
</svg>
</body></html>
